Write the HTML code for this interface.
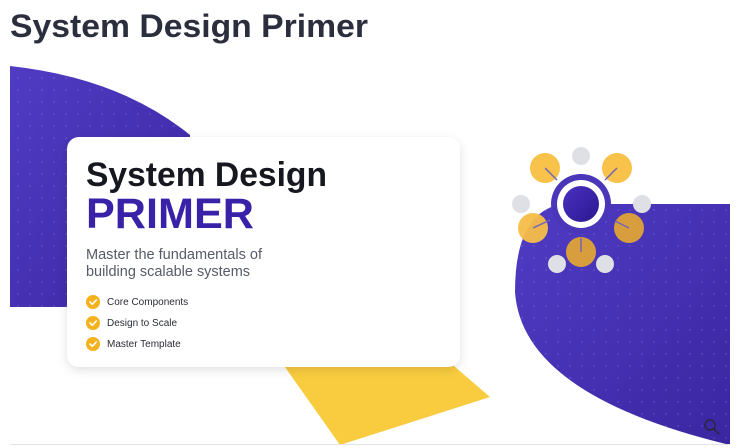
<!DOCTYPE html>
<html><head><meta charset="utf-8"><style>
html,body{margin:0;padding:0;background:#fff;width:737px;height:448px;overflow:hidden}
svg{display:block}
text{font-family:"Liberation Sans",Arial,sans-serif}
</style></head><body>
<svg width="737" height="448" viewBox="0 0 737 448" xmlns="http://www.w3.org/2000/svg">
<defs>
<linearGradient id="pg" x1="0" y1="0" x2="1" y2="1"><stop offset="0" stop-color="#503cc4"/><stop offset="1" stop-color="#3a26a0"/></linearGradient>
<linearGradient id="ig" x1="0" y1="0" x2="1" y2="1"><stop offset="0" stop-color="#4a30c0"/><stop offset="1" stop-color="#2a1890"/></linearGradient>
<pattern id="dots" width="12" height="12" patternUnits="userSpaceOnUse"><circle cx="6" cy="6" r="0.7" fill="#8a7ee0" opacity="0.6"/></pattern>
<filter id="sh" x="-10%" y="-10%" width="120%" height="130%"><feDropShadow dx="0" dy="3" stdDeviation="5" flood-color="#000" flood-opacity="0.12"/></filter>
</defs>
<text x="10" y="37" font-size="32" font-weight="bold" fill="#2b2f3d" textLength="358" lengthAdjust="spacingAndGlyphs">System Design Primer</text>
<path d="M10,66 Q120,78 190,135 L190,307 L10,307 Z" fill="url(#pg)"/>
<path d="M10,66 Q120,78 190,135 L190,307 L10,307 Z" fill="url(#dots)"/>
<path d="M730,204 L562,204 Q515,212 515,292 Q522,395 730,445 Z" fill="url(#pg)"/>
<path d="M730,204 L562,204 Q515,212 515,292 Q522,395 730,445 Z" fill="url(#dots)"/>
<polygon points="280,360 447,360 490,397 340,445" fill="#f9cc3f"/>
<rect x="67" y="137" width="393" height="230" rx="12" fill="#fff" filter="url(#sh)"/>
<text x="86" y="186" font-size="34" font-weight="bold" fill="#15181f" textLength="241" lengthAdjust="spacingAndGlyphs">System Design</text>
<text x="86" y="228" font-size="43" font-weight="bold" fill="#3a22a8" textLength="168" lengthAdjust="spacingAndGlyphs">PRIMER</text>
<text x="86" y="259" font-size="15" fill="#555b68" textLength="176" lengthAdjust="spacingAndGlyphs">Master the fundamentals of</text>
<text x="86" y="276" font-size="15" fill="#555b68" textLength="164" lengthAdjust="spacingAndGlyphs">building scalable systems</text>
<g fill="#f5b21c"><circle cx="93" cy="302" r="7"/><circle cx="93" cy="323" r="7"/><circle cx="93" cy="344" r="7"/></g>
<g stroke="#fff" stroke-width="1.6" fill="none" stroke-linecap="round" stroke-linejoin="round">
<path d="M90,302 L92.3,304.3 L96.3,300"/><path d="M90,323 L92.3,325.3 L96.3,321"/><path d="M90,344 L92.3,346.3 L96.3,342"/></g>
<g font-size="10" fill="#2a2d36"><text x="107" y="305">Core Components</text><text x="107" y="326">Design to Scale</text><text x="107" y="347">Master Template</text></g>
<g fill="#dfe0e6"><circle cx="581" cy="156" r="9"/><circle cx="521" cy="204" r="9"/><circle cx="642" cy="204" r="9"/><circle cx="557" cy="264" r="9"/><circle cx="605" cy="264" r="9"/></g>
<g><circle cx="545" cy="168" r="15" fill="#f9c24a"/><circle cx="617" cy="168" r="15" fill="#f9c24a"/><circle cx="533" cy="228" r="15" fill="#f5bd48" opacity="0.95"/><circle cx="629" cy="228" r="15" fill="#d89d3c"/><circle cx="581" cy="252" r="15" fill="#d89d3c"/></g>
<g stroke="#7264b8" stroke-width="1.5"><path d="M545,168 L557,180"/><path d="M617,168 L605,180"/><path d="M533,228 L550,220"/><path d="M629,228 L615,221"/><path d="M581,252 L581,238"/></g>
<circle cx="581" cy="204" r="30" fill="#4a36b8"/><circle cx="581" cy="204" r="24" fill="#fff"/><circle cx="581" cy="204" r="18" fill="url(#ig)"/>
<g stroke="#2a2640" stroke-width="1.6" fill="none"><circle cx="710" cy="425" r="5"/><path d="M714,429 L719,434"/></g>
<rect x="10" y="444" width="720" height="1" fill="#e4e4e8"/>
</svg>
</body></html>
